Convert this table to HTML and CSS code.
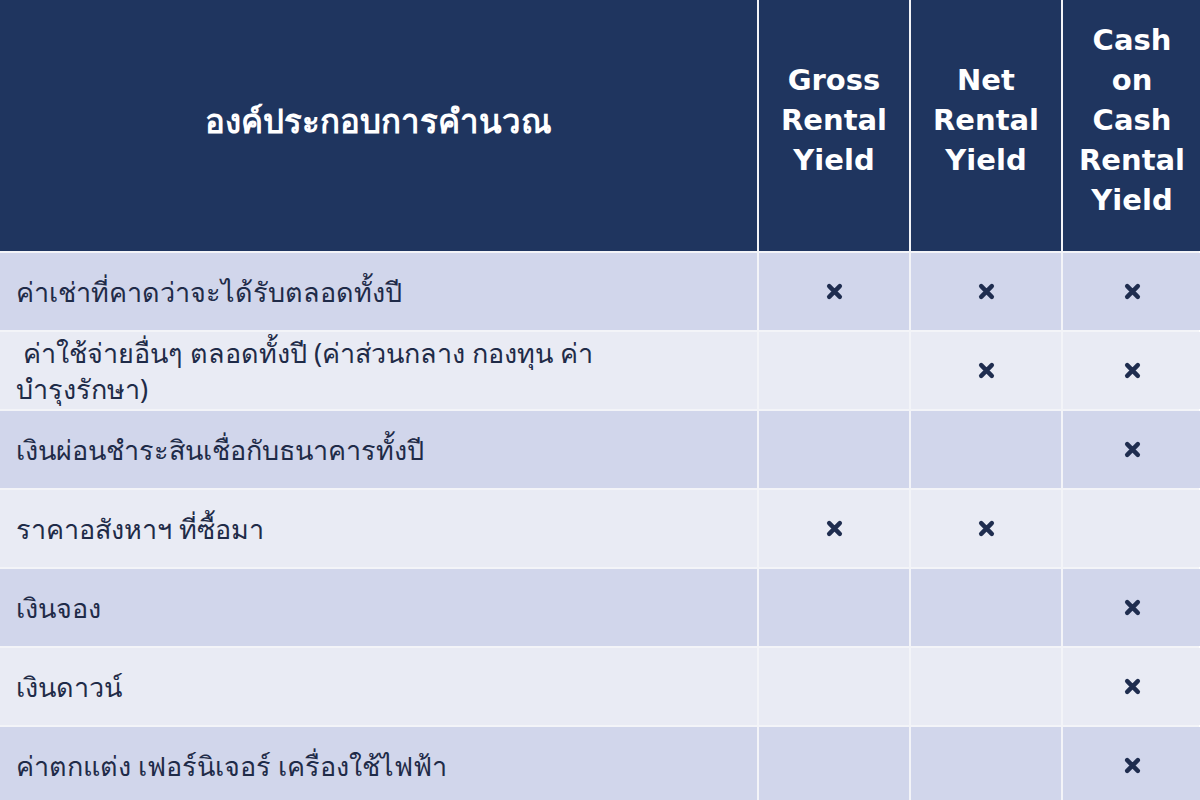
FILE: index.html
```html
<!DOCTYPE html>
<html lang="th">
<head>
<meta charset="utf-8">
<link rel="stylesheet" href="styles.css">
</head>
<body>
<div class="table">
  <div class="hcell first">องค์ประกอบการคำนวณ</div>
  <div class="hcell">Gross<br>Rental<br>Yield</div>
  <div class="hcell">Net<br>Rental<br>Yield</div>
  <div class="hcell">Cash<br>on<br>Cash<br>Rental<br>Yield</div>

  <div class="cell label odd">ค่าเช่าที่คาดว่าจะได้รับตลอดทั้งปี</div>
  <div class="cell odd"><svg class="x" viewBox="0 0 16 16"><path d="M3 3L13 13M13 3L3 13"/></svg></div>
  <div class="cell odd"><svg class="x" viewBox="0 0 16 16"><path d="M3 3L13 13M13 3L3 13"/></svg></div>
  <div class="cell odd"><svg class="x" viewBox="0 0 16 16"><path d="M3 3L13 13M13 3L3 13"/></svg></div>

  <div class="cell label wrap even"><span>&nbsp;ค่าใช้จ่ายอื่นๆ ตลอดทั้งปี (ค่าส่วนกลาง กองทุน ค่า<br>บำรุงรักษา)</span></div>
  <div class="cell even"></div>
  <div class="cell even"><svg class="x" viewBox="0 0 16 16"><path d="M3 3L13 13M13 3L3 13"/></svg></div>
  <div class="cell even"><svg class="x" viewBox="0 0 16 16"><path d="M3 3L13 13M13 3L3 13"/></svg></div>

  <div class="cell label odd">เงินผ่อนชำระสินเชื่อกับธนาคารทั้งปี</div>
  <div class="cell odd"></div>
  <div class="cell odd"></div>
  <div class="cell odd"><svg class="x" viewBox="0 0 16 16"><path d="M3 3L13 13M13 3L3 13"/></svg></div>

  <div class="cell label even">ราคาอสังหาฯ ที่ซื้อมา</div>
  <div class="cell even"><svg class="x" viewBox="0 0 16 16"><path d="M3 3L13 13M13 3L3 13"/></svg></div>
  <div class="cell even"><svg class="x" viewBox="0 0 16 16"><path d="M3 3L13 13M13 3L3 13"/></svg></div>
  <div class="cell even"></div>

  <div class="cell label odd">เงินจอง</div>
  <div class="cell odd"></div>
  <div class="cell odd"></div>
  <div class="cell odd"><svg class="x" viewBox="0 0 16 16"><path d="M3 3L13 13M13 3L3 13"/></svg></div>

  <div class="cell label even">เงินดาวน์</div>
  <div class="cell even"></div>
  <div class="cell even"></div>
  <div class="cell even"><svg class="x" viewBox="0 0 16 16"><path d="M3 3L13 13M13 3L3 13"/></svg></div>

  <div class="cell label odd">ค่าตกแต่ง เฟอร์นิเจอร์ เครื่องใช้ไฟฟ้า</div>
  <div class="cell odd"></div>
  <div class="cell odd"></div>
  <div class="cell odd"><svg class="x" viewBox="0 0 16 16"><path d="M3 3L13 13M13 3L3 13"/></svg></div>
</div>
</body>
</html>
```
FILE: styles.css
```css
html, body {
  margin: 0;
  padding: 0;
  background: #ffffff;
}
body {
  width: 1200px;
  height: 800px;
  overflow: hidden;
  font-family: "Noto Sans", "Lato", sans-serif;
}
.table {
  display: grid;
  grid-template-columns: 757px 150px 150px 138px;
  grid-template-rows: 251px repeat(7, 77px);
  column-gap: 2px;
  row-gap: 2px;
  background: #f3f4f8;
  width: 1199px;
}
.hcell {
  background: #1f355f;
  color: #ffffff;
  font-family: "DejaVu Sans", "Noto Sans", sans-serif;
  font-weight: 700;
  font-size: 29px;
  line-height: 40px;
  display: flex;
  align-items: center;
  justify-content: center;
  text-align: center;
  padding-bottom: 12px;
}
.hcell.first {
  font-family: "Noto Sans", "Lato", sans-serif;
  font-weight: 600;
  font-size: 33px;
  padding-bottom: 10px;
}
.cell {
  display: flex;
  align-items: center;
  justify-content: center;
  color: #1f2b48;
}
.cell.label {
  justify-content: flex-start;
  padding: 0 0 0 16px;
  font-size: 27px;
  line-height: 33px;
}
.cell.label.wrap {
  line-height: 36px;
}
.odd {
  background: #d1d6eb;
}
.even {
  background: #e9ebf4;
}
.x {
  width: 17px;
  height: 17px;
}
.x path {
  stroke: #1f2d4f;
  stroke-width: 4.2;
  stroke-linecap: round;
  fill: none;
}
```
